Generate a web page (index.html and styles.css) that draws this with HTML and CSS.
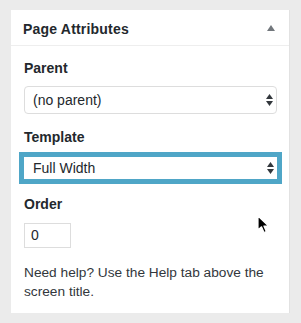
FILE: index.html
```html
<!DOCTYPE html>
<html lang="en">
<head>
  <meta charset="UTF-8" />
  <title>Page Attributes</title>
  <link rel="stylesheet" href="styles.css">
</head>
<body>
  <div class="postbox">
    <div class="postbox-header">
      <h2>Page Attributes</h2>
      <svg class="toggle" width="8" height="6" viewBox="0 0 8 6"><polygon points="4,0 8,6 0,6" /></svg>
    </div>
    <div class="inside">
      <p class="label">Parent</p>
      <div class="select">
        <span>(no parent)</span>
        <svg class="arrows" width="7" height="12" viewBox="0 0 7 12"><polygon points="3.5,0 7,5 0,5" /><polygon points="0,7 7,7 3.5,12" /></svg>
      </div>

      <p class="label">Template</p>
      <div class="select highlighted">
        <span>Full Width</span>
        <svg class="arrows" width="7" height="12" viewBox="0 0 7 12"><polygon points="3.5,0 7,5 0,5" /><polygon points="0,7 7,7 3.5,12" /></svg>
      </div>

      <p class="label">Order</p>
      <div class="order">0</div>

      <p class="help">Need help? Use the Help tab above the screen title.</p>
    </div>
  </div>

  <svg class="cursor" width="14" height="20" viewBox="0 0 14 20">
    <path d="M1 1 L1 15 L4.5 11.8 L7 17.5 L9.3 16.5 L6.9 11 L11.5 11 Z" fill="#000" stroke="#fff" stroke-width="1.2" stroke-linejoin="round"/>
  </svg>
</body>
</html>
```

FILE: styles.css
```css
body {
  margin: 0;
  background: #ebebeb;
  font-family: "Liberation Sans", Arial, sans-serif;
  color: #23282d;
}
.postbox {
  box-sizing: border-box;
  width: 279px;
  margin: 10px 0 0 11px;
  background: #fff;
  border-right: 1px solid #e2e2e2;
}
.postbox-header {
  height: 35px;
  display: flex;
  align-items: center;
  justify-content: space-between;
  padding: 0 14px 0 12px;
  border-bottom: 1px solid #eee;
}
.postbox-header h2 {
  margin: 0;
  font-size: 14px;
  font-weight: bold;
  letter-spacing: 0.2px;
  padding-top: 2px;
}
.toggle {
  fill: #72777c;
  margin-top: 1px;
}
.inside {
  padding: 13px 12px 12px 13px;
}
.label {
  margin: 0;
  font-size: 14px;
  font-weight: bold;
  line-height: 18px;
}
.select {
  box-sizing: border-box;
  height: 28px;
  margin: 9px 0 14px;
  padding: 0 3px 0 8px;
  display: flex;
  align-items: center;
  justify-content: space-between;
  border: 1px solid #ddd;
  border-radius: 4px;
  font-size: 14px;
}
.arrows {
  fill: #32373c;
}
.select.highlighted {
  height: 32px;
  margin: 6px -5px 11px;
  padding: 0 3px 0 9px;
  border: 5px solid #4fa6c7;
  border-radius: 0;
}
.order {
  box-sizing: border-box;
  width: 47px;
  height: 25px;
  margin: 10px 0 15px;
  padding: 0 6px;
  border: 1px solid #ddd;
  font-size: 14px;
  line-height: 23px;
}
.help {
  margin: 0;
  font-size: 13.7px;
  line-height: 19px;
  color: #32373c;
}
.cursor {
  position: absolute;
  left: 257px;
  top: 215px;
}
```
